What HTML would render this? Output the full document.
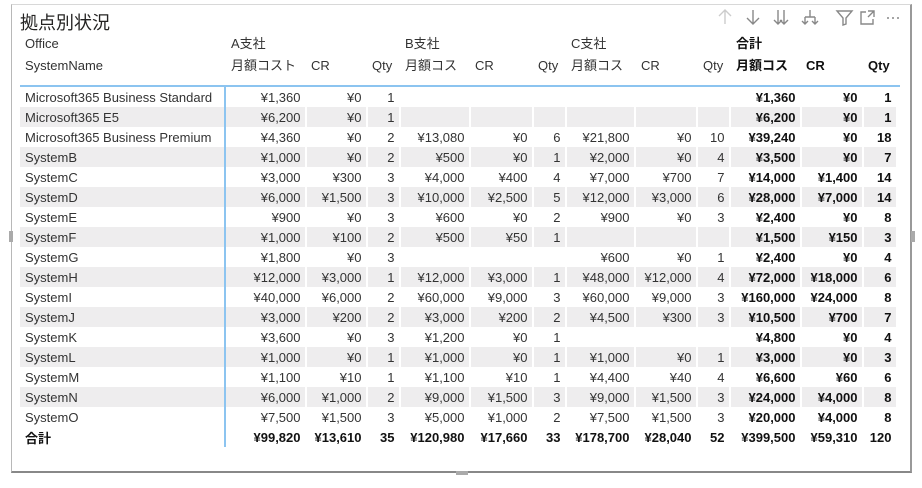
<!DOCTYPE html>
<html><head><meta charset="utf-8"><style>
body{margin:0;width:922px;height:488px;background:#fff;position:relative;overflow:hidden;font-family:"Liberation Sans","Noto Sans CJK JP",sans-serif;color:#333;}
.frame{position:absolute;left:11px;top:4px;width:901px;height:469px;border:1px solid #b8b8b8;border-top-color:#d8d8d8;border-bottom:2px solid #888;border-right:2px solid #999;box-sizing:border-box;}
.title{position:absolute;left:20px;top:9px;font-size:18px;color:#252423;}
.h{position:absolute;font-size:13px;line-height:16px;height:16px;color:#333;white-space:nowrap;}
.b{font-weight:bold;color:#111;}
table{position:absolute;left:20px;top:87px;border-collapse:collapse;font-size:13px;table-layout:fixed;}
td{height:20px;padding:0 5px 0 0;text-align:right;white-space:nowrap;overflow:hidden;border-right:1px solid transparent;}
td:first-child{text-align:left;padding-left:5px;border-right:2px solid #8cc4f0;}
tr:nth-child(even) td{background:#eeedee;}
tr td{box-shadow:inset -1px 0 0 #fff;}
tr td:first-child{box-shadow:none;}
td.t{font-weight:bold;color:#111;}
tr.tot td{font-weight:bold;color:#111;background:#fff;}
.line{position:absolute;left:20px;top:85px;width:880px;height:2px;background:#8cc4f0;}
.hd{position:absolute;background:#aaa;}
</style></head><body>
<div class="frame"></div>
<div class="hd" style="left:9px;top:231px;width:4px;height:11px"></div>
<div class="hd" style="left:911px;top:231px;width:4px;height:11px"></div>
<div class="hd" style="left:456px;top:471px;width:12px;height:4px"></div>
<div class="title">拠点別状況</div>
<svg style="position:absolute;left:714px;top:6px" width="200" height="24" viewBox="0 0 200 24" fill="none" stroke-width="1.4">
<path d="M11 4v14M5 10l6-6 6 6" stroke="#ccc"/>
<path d="M39 4v14M33 12l6 6 6-6" stroke="#888"/>
<path d="M64 4v14M70 4v14M60 14l4 4 4-4M66 14l4 4 4-4" stroke="#888"/>
<path d="M96 4v7M91 11h10M91 11v7M101 11v7M88 15l3 3 3-3M98 15l3 3 3-3" stroke="#888"/>
<path d="M123 5h15l-6 7v6l-3 1v-7z" stroke="#888"/>
<path d="M152 6h-5v12h12v-5M154 5h6v6M160 5l-6 6" stroke="#888"/>
<circle cx="174" cy="12" r="1" fill="#888" stroke="none"/><circle cx="179" cy="12" r="1" fill="#888" stroke="none"/><circle cx="184" cy="12" r="1" fill="#888" stroke="none"/>
</svg>
<div class="h" style="left:25px;top:36px">Office</div>
<div class="h" style="left:25px;top:58px">SystemName</div>
<div class="h" style="left:231px;top:36px">A支社</div>
<div class="h" style="left:231px;top:58px">月額コスト</div>
<div class="h" style="left:311px;top:58px">CR</div>
<div class="h" style="left:372px;top:58px">Qty</div>
<div class="h" style="left:405px;top:36px">B支社</div>
<div class="h" style="left:405px;top:58px">月額コス</div>
<div class="h" style="left:475px;top:58px">CR</div>
<div class="h" style="left:538px;top:58px">Qty</div>
<div class="h" style="left:571px;top:36px">C支社</div>
<div class="h" style="left:571px;top:58px">月額コス</div>
<div class="h" style="left:641px;top:58px">CR</div>
<div class="h" style="left:703px;top:58px">Qty</div>
<div class="h b" style="left:736px;top:36px">合計</div>
<div class="h b" style="left:736px;top:58px">月額コス</div>
<div class="h b" style="left:806px;top:58px">CR</div>
<div class="h b" style="left:868px;top:58px">Qty</div>
<div class="line"></div>
<table>
<colgroup><col style="width:205px"><col style="width:81px"><col style="width:61px"><col style="width:33px"><col style="width:70px"><col style="width:63px"><col style="width:33px"><col style="width:69px"><col style="width:62px"><col style="width:33px"><col style="width:71px"><col style="width:62px"><col style="width:34px"></colgroup>
<tr><td>Microsoft365 Business Standard</td><td>¥1,360</td><td>¥0</td><td>1</td><td></td><td></td><td></td><td></td><td></td><td></td><td class="t">¥1,360</td><td class="t">¥0</td><td class="t">1</td></tr>
<tr><td>Microsoft365 E5</td><td>¥6,200</td><td>¥0</td><td>1</td><td></td><td></td><td></td><td></td><td></td><td></td><td class="t">¥6,200</td><td class="t">¥0</td><td class="t">1</td></tr>
<tr><td>Microsoft365 Business Premium</td><td>¥4,360</td><td>¥0</td><td>2</td><td>¥13,080</td><td>¥0</td><td>6</td><td>¥21,800</td><td>¥0</td><td>10</td><td class="t">¥39,240</td><td class="t">¥0</td><td class="t">18</td></tr>
<tr><td>SystemB</td><td>¥1,000</td><td>¥0</td><td>2</td><td>¥500</td><td>¥0</td><td>1</td><td>¥2,000</td><td>¥0</td><td>4</td><td class="t">¥3,500</td><td class="t">¥0</td><td class="t">7</td></tr>
<tr><td>SystemC</td><td>¥3,000</td><td>¥300</td><td>3</td><td>¥4,000</td><td>¥400</td><td>4</td><td>¥7,000</td><td>¥700</td><td>7</td><td class="t">¥14,000</td><td class="t">¥1,400</td><td class="t">14</td></tr>
<tr><td>SystemD</td><td>¥6,000</td><td>¥1,500</td><td>3</td><td>¥10,000</td><td>¥2,500</td><td>5</td><td>¥12,000</td><td>¥3,000</td><td>6</td><td class="t">¥28,000</td><td class="t">¥7,000</td><td class="t">14</td></tr>
<tr><td>SystemE</td><td>¥900</td><td>¥0</td><td>3</td><td>¥600</td><td>¥0</td><td>2</td><td>¥900</td><td>¥0</td><td>3</td><td class="t">¥2,400</td><td class="t">¥0</td><td class="t">8</td></tr>
<tr><td>SystemF</td><td>¥1,000</td><td>¥100</td><td>2</td><td>¥500</td><td>¥50</td><td>1</td><td></td><td></td><td></td><td class="t">¥1,500</td><td class="t">¥150</td><td class="t">3</td></tr>
<tr><td>SystemG</td><td>¥1,800</td><td>¥0</td><td>3</td><td></td><td></td><td></td><td>¥600</td><td>¥0</td><td>1</td><td class="t">¥2,400</td><td class="t">¥0</td><td class="t">4</td></tr>
<tr><td>SystemH</td><td>¥12,000</td><td>¥3,000</td><td>1</td><td>¥12,000</td><td>¥3,000</td><td>1</td><td>¥48,000</td><td>¥12,000</td><td>4</td><td class="t">¥72,000</td><td class="t">¥18,000</td><td class="t">6</td></tr>
<tr><td>SystemI</td><td>¥40,000</td><td>¥6,000</td><td>2</td><td>¥60,000</td><td>¥9,000</td><td>3</td><td>¥60,000</td><td>¥9,000</td><td>3</td><td class="t">¥160,000</td><td class="t">¥24,000</td><td class="t">8</td></tr>
<tr><td>SystemJ</td><td>¥3,000</td><td>¥200</td><td>2</td><td>¥3,000</td><td>¥200</td><td>2</td><td>¥4,500</td><td>¥300</td><td>3</td><td class="t">¥10,500</td><td class="t">¥700</td><td class="t">7</td></tr>
<tr><td>SystemK</td><td>¥3,600</td><td>¥0</td><td>3</td><td>¥1,200</td><td>¥0</td><td>1</td><td></td><td></td><td></td><td class="t">¥4,800</td><td class="t">¥0</td><td class="t">4</td></tr>
<tr><td>SystemL</td><td>¥1,000</td><td>¥0</td><td>1</td><td>¥1,000</td><td>¥0</td><td>1</td><td>¥1,000</td><td>¥0</td><td>1</td><td class="t">¥3,000</td><td class="t">¥0</td><td class="t">3</td></tr>
<tr><td>SystemM</td><td>¥1,100</td><td>¥10</td><td>1</td><td>¥1,100</td><td>¥10</td><td>1</td><td>¥4,400</td><td>¥40</td><td>4</td><td class="t">¥6,600</td><td class="t">¥60</td><td class="t">6</td></tr>
<tr><td>SystemN</td><td>¥6,000</td><td>¥1,000</td><td>2</td><td>¥9,000</td><td>¥1,500</td><td>3</td><td>¥9,000</td><td>¥1,500</td><td>3</td><td class="t">¥24,000</td><td class="t">¥4,000</td><td class="t">8</td></tr>
<tr><td>SystemO</td><td>¥7,500</td><td>¥1,500</td><td>3</td><td>¥5,000</td><td>¥1,000</td><td>2</td><td>¥7,500</td><td>¥1,500</td><td>3</td><td class="t">¥20,000</td><td class="t">¥4,000</td><td class="t">8</td></tr>
<tr class="tot"><td>合計</td><td>¥99,820</td><td>¥13,610</td><td>35</td><td>¥120,980</td><td>¥17,660</td><td>33</td><td>¥178,700</td><td>¥28,040</td><td>52</td><td>¥399,500</td><td>¥59,310</td><td>120</td></tr>
</table>
</body></html>
